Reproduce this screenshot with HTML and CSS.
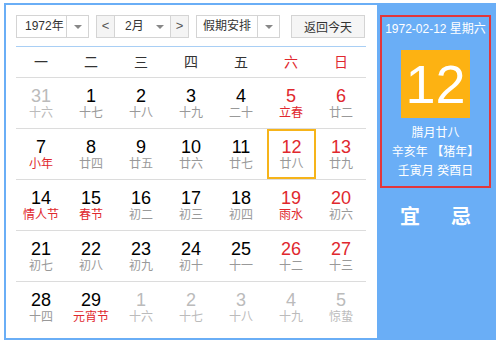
FILE: index.html
```html
<!DOCTYPE html>
<html>
<head>
    <title>万年历</title>
    <link rel="stylesheet" href="styles.css">
</head>
<body>
    <div class="calendar">
        <div class="main">
            <div class="toolbar">
                <div class="select year-select">
                    <span class="select-text">1972年</span>
                    <span class="select-arrow"></span>
                </div>
                <div class="month-group">
                    <span class="nav-btn">&lt;</span>
                    <div class="select month-select">
                        <span class="select-text">2月</span>
                        <span class="select-arrow plain"></span>
                    </div>
                    <span class="nav-btn">&gt;</span>
                </div>
                <div class="select holiday-select">
                    <span class="select-text">假期安排</span>
                    <span class="select-arrow"></span>
                </div>
                <button class="today-btn">返回今天</button>
            </div>

            <div class="weekdays">
                <span>一</span><span>二</span><span>三</span><span>四</span><span>五</span>
                <span class="weekend">六</span><span class="weekend">日</span>
            </div>

            <div class="days">
                <div class="row">
                    <div class="day other"><b>31</b><i>十六</i></div>
                    <div class="day"><b>1</b><i>十七</i></div>
                    <div class="day"><b>2</b><i>十八</i></div>
                    <div class="day"><b>3</b><i>十九</i></div>
                    <div class="day"><b>4</b><i>二十</i></div>
                    <div class="day weekend"><b>5</b><i class="fest">立春</i></div>
                    <div class="day weekend"><b>6</b><i>廿二</i></div>
                </div>
                <div class="row">
                    <div class="day"><b>7</b><i class="fest">小年</i></div>
                    <div class="day"><b>8</b><i>廿四</i></div>
                    <div class="day"><b>9</b><i>廿五</i></div>
                    <div class="day"><b>10</b><i>廿六</i></div>
                    <div class="day"><b>11</b><i>廿七</i></div>
                    <div class="day weekend selected"><b>12</b><i>廿八</i></div>
                    <div class="day weekend"><b>13</b><i>廿九</i></div>
                </div>
                <div class="row">
                    <div class="day"><b>14</b><i class="fest">情人节</i></div>
                    <div class="day"><b>15</b><i class="fest">春节</i></div>
                    <div class="day"><b>16</b><i>初二</i></div>
                    <div class="day"><b>17</b><i>初三</i></div>
                    <div class="day"><b>18</b><i>初四</i></div>
                    <div class="day weekend"><b>19</b><i class="fest">雨水</i></div>
                    <div class="day weekend"><b>20</b><i>初六</i></div>
                </div>
                <div class="row">
                    <div class="day"><b>21</b><i>初七</i></div>
                    <div class="day"><b>22</b><i>初八</i></div>
                    <div class="day"><b>23</b><i>初九</i></div>
                    <div class="day"><b>24</b><i>初十</i></div>
                    <div class="day"><b>25</b><i>十一</i></div>
                    <div class="day weekend"><b>26</b><i>十二</i></div>
                    <div class="day weekend"><b>27</b><i>十三</i></div>
                </div>
                <div class="row">
                    <div class="day"><b>28</b><i>十四</i></div>
                    <div class="day"><b>29</b><i class="fest">元宵节</i></div>
                    <div class="day other"><b>1</b><i>十六</i></div>
                    <div class="day other"><b>2</b><i>十七</i></div>
                    <div class="day other"><b>3</b><i>十八</i></div>
                    <div class="day other"><b>4</b><i>十九</i></div>
                    <div class="day other"><b>5</b><i>惊蛰</i></div>
                </div>
            </div>
        </div>

        <div class="side">
            <div class="detail">
                <div class="detail-date">1972-02-12 星期六</div>
                <div class="big-day">12</div>
                <div class="lunar-line">腊月廿八</div>
                <div class="lunar-line">辛亥年 【猪年】</div>
                <div class="lunar-line">壬寅月 癸酉日</div>
            </div>
            <div class="yiji">
                <span>宜</span>
                <span>忌</span>
            </div>
        </div>
    </div>
</body>
</html>
```

FILE: styles.css
```css
body {
    margin: 0;
    padding: 3px 0 0 4px;
    background-color: #fff;
    font-family: "Liberation Sans", "Noto Sans CJK SC", sans-serif;
}

.calendar {
    width: 488px;
    height: 333px;
    border: 2px solid #6aaef6;
    display: flex;
}

.main {
    width: 350px;
    padding: 10px 11px 0 10px;
}

/* toolbar */

.toolbar {
    display: flex;
    height: 23px;
    white-space: nowrap;
}

.select {
    display: flex;
    box-sizing: border-box;
    height: 23px;
    border: 1px solid #d4d4d4;
    background-color: #fff;
    font-size: 12px;
    color: #333;
}

.select-text {
    flex: 1;
    line-height: 21px;
    padding-left: 8px;
}

.select-arrow {
    width: 21px;
    border-left: 1px solid #d4d4d4;
    position: relative;
}

.select-arrow.plain {
    border-left: none;
}

.select-arrow::after {
    content: "";
    position: absolute;
    left: 7px;
    top: 9px;
    border-left: 4px solid transparent;
    border-right: 4px solid transparent;
    border-top: 4px solid #888;
}

.year-select {
    width: 73px;
}

.month-group {
    display: flex;
    margin-left: 7px;
}

.nav-btn {
    box-sizing: border-box;
    width: 19px;
    height: 23px;
    border: 1px solid #d4d4d4;
    background-color: #f4f4f4;
    color: #555;
    font-size: 13px;
    line-height: 19px;
    text-align: center;
}

.month-select {
    width: 55px;
    border-left: none;
    border-right: none;
    padding-left: 2px;
}

.holiday-select {
    width: 84px;
    margin-left: 7px;
}

.holiday-select .select-text {
    padding-left: 6px;
}

.today-btn {
    width: 74px;
    height: 23px;
    margin-left: 11px;
    border: 1px solid #d4d4d4;
    background-color: #f5f5f5;
    font-family: inherit;
    font-size: 12px;
    color: #333;
    padding: 0;
}

/* grid */

.weekdays {
    display: grid;
    grid-template-columns: repeat(7, 50px);
    margin-top: 8px;
    height: 30px;
    border-top: 1px solid #a9cff5;
    border-bottom: 1px solid #dcdcdc;
    font-size: 14px;
    line-height: 30px;
    text-align: center;
    color: #333;
}

.weekdays .weekend {
    color: #e0282e;
}

.row {
    display: grid;
    grid-template-columns: repeat(7, 50px);
    height: 50px;
    border-bottom: 1px solid #dcdcdc;
}

.row:last-child {
    border-bottom: none;
}

.day {
    box-sizing: border-box;
    padding-top: 8px;
    text-align: center;
}

.day b {
    display: block;
    font-weight: normal;
    font-size: 18px;
    line-height: 20px;
    color: #000;
}

.day i {
    display: block;
    font-style: normal;
    font-size: 12px;
    line-height: 14px;
    color: #999;
}

.day.weekend b,
.day i.fest {
    color: #e0282e;
}

.day.other b,
.day.other i {
    color: #bbb;
}

.day.selected {
    border: 2px solid #f6b41a;
    padding-top: 6px;
    margin-left: 1px;
}

/* side panel */

.side {
    width: 118px;
    background-color: #6aaef6;
    color: #fff;
}

.detail {
    box-sizing: border-box;
    width: 111px;
    height: 173px;
    margin: 10px 0 0 3px;
    border: 2px solid #e2363b;
    text-align: center;
    white-space: nowrap;
}

.detail-date {
    font-size: 12px;
    line-height: 16px;
    margin-top: 4px;
}

.big-day {
    width: 69px;
    height: 68px;
    margin: 13px auto 6px;
    background-color: #fdb212;
    font-size: 54px;
    line-height: 68px;
}

.lunar-line {
    font-size: 12px;
    line-height: 19px;
}

.yiji {
    display: flex;
    justify-content: center;
    gap: 31px;
    margin-top: 13px;
    font-size: 20px;
    font-weight: bold;
}
```
